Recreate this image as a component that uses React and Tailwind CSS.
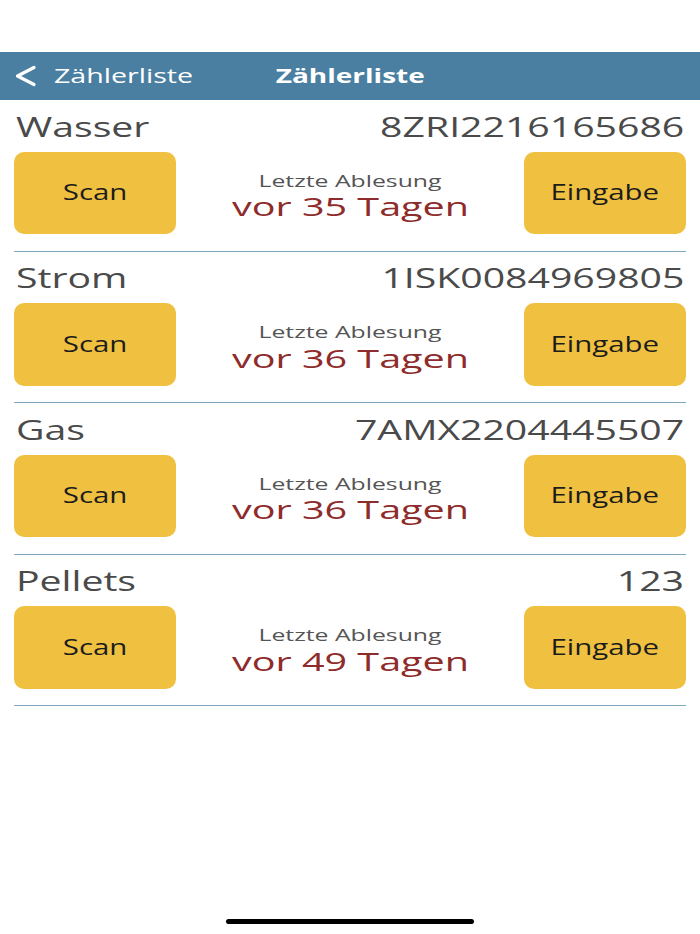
import React from "react";

const meters = [
  { name: "Wasser", number: "8ZRI2216165686", days: 35 },
  { name: "Strom", number: "1ISK0084969805", days: 36 },
  { name: "Gas", number: "7AMX2204445507", days: 36 },
  { name: "Pellets", number: "123", days: 49 },
];

// the screenshot is stretched sideways, so every text gets a horizontal scale
const Wide = ({ origin = "origin-left", className = "scale-x-[1.4]", children }) => (
  <span className={`inline-block ${origin} ${className}`}>{children}</span>
);

const BackIcon = () => (
  <svg width="22" height="22" viewBox="0 0 22 22" fill="none" stroke="white" strokeWidth="3.2" strokeLinecap="round" strokeLinejoin="round">
    <polyline points="19,2.5 2.5,11 19,19.5" />
  </svg>
);

function MeterRow({ meter }) {
  return (
    <div className="pt-[11.5px] pb-[16.5px] border-b border-[#7fa5bc]">
      <div className="flex justify-between h-[28px] text-[28px] leading-none text-[#4a4a4a] px-[2px]">
        <Wide>{meter.name}</Wide>
        <Wide origin="origin-right">{meter.number}</Wide>
      </div>
      <div className="mt-[12px] flex h-[82.5px]">
        <button className="w-[162px] h-full rounded-[10px] bg-[#f0c040] flex items-center justify-center text-[21px] text-[#1c1c1c]">
          <Wide origin="origin-center">Scan</Wide>
        </button>
        <div className="flex-1 flex flex-col items-center pt-[21px]">
          <div className="text-[16.5px] leading-none h-[16.5px] text-[#555555]">
            <Wide origin="origin-center" className="scale-x-[1.5]">Letzte Ablesung</Wide>
          </div>
          <div className="mt-[5px] text-[25.5px] leading-none text-[#8e2b2b]">
            <Wide origin="origin-center" className="scale-x-[1.55]">vor {meter.days} Tagen</Wide>
          </div>
        </div>
        <button className="w-[162px] h-full rounded-[10px] bg-[#f0c040] flex items-center justify-center text-[21px] text-[#1c1c1c]">
          <Wide origin="origin-center">Eingabe</Wide>
        </button>
      </div>
    </div>
  );
}

export default function App() {
  return (
    <div className="relative min-h-[934px] bg-white font-['Open_Sans',sans-serif]">
      <div className="h-[52px]" />
      <header className="h-[48px] bg-[#4a7fa1] flex items-center text-white text-[20px] leading-none">
        <div className="w-[200px] flex items-center pl-[15px]">
          <BackIcon />
          <span className="ml-[17px]"><Wide className="scale-x-[1.43]">Zählerliste</Wide></span>
        </div>
        <div className="flex-1 text-center font-bold pr-[200px]">
          <Wide origin="origin-center">Zählerliste</Wide>
        </div>
      </header>
      <div className="px-[14px]">
        {meters.map((m) => (
          <MeterRow key={m.name} meter={m} />
        ))}
      </div>
      <div className="absolute bottom-[10px] left-[226px] w-[248px] h-[5px] rounded-full bg-black" />
    </div>
  );
}
